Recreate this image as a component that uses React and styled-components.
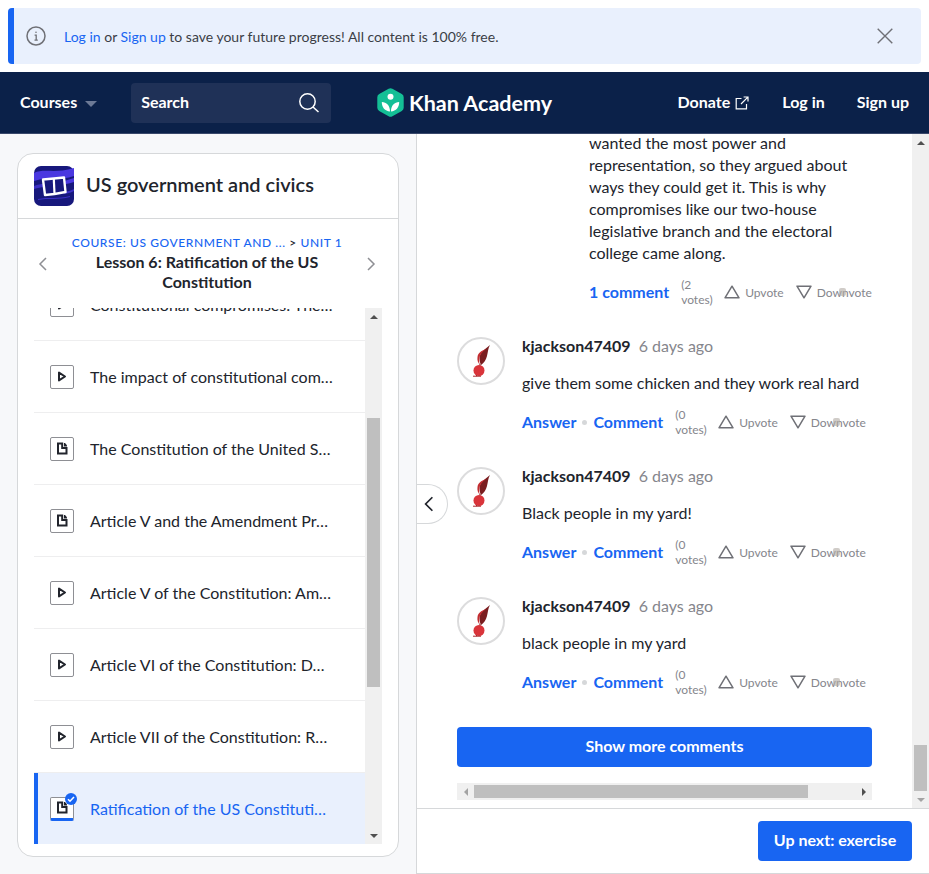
import React from 'react';
import styled, {createGlobalStyle} from 'styled-components';

const GlobalStyle = createGlobalStyle`
    html, body {
        margin: 0;
        padding: 0;
        height: 100%;
        overflow: hidden;
        background: #fff;
    }
    body {
        font-family: Lato, "Liberation Sans", sans-serif;
        color: #21242c;
    }
`;

const Page = styled.div`
    width: 929px;
    height: 874px;
    display: flex;
    flex-direction: column;
    overflow: hidden;
`;

/* banner */
const BannerWrap = styled.div`
    padding: 8px 8px 8px;
`;
const Banner = styled.div`
    height: 56px;
    box-sizing: border-box;
    display: flex;
    align-items: center;
    background: #e9f0fd;
    border-left: 6px solid #1865f2;
    border-radius: 4px;
    padding: 0 28px 0 12px;
    font-size: 14px;
    color: #3b3e46;
`;
const BannerText = styled.div`
    flex: 1;
    margin-left: 18px;
`;
const BannerLink = styled.a`
    color: #1865f2;
`;
const IconSlot = styled.span`
    display: inline-flex;
    flex: none;
`;

/* top nav */
const Nav = styled.header`
    height: 62px;
    box-sizing: border-box;
    background: #0b2149;
    border-bottom: 1px solid #39486b;
    display: grid;
    grid-template-columns: 1fr auto 1fr;
    align-items: center;
    padding: 0 20px;
    color: #fff;
    font-weight: 700;
    font-size: 16px;
`;
const NavLeft = styled.div`
    display: flex;
    align-items: center;
`;
const NavLabel = styled.span`
    margin-top: -2px;
`;
const Caret = styled.span`
    width: 0;
    height: 0;
    margin-left: 8px;
    margin-top: 2px;
    border-left: 6px solid transparent;
    border-right: 6px solid transparent;
    border-top: 6px solid #6d7a96;
`;
const SearchBox = styled.div`
    width: 200px;
    height: 40px;
    box-sizing: border-box;
    margin-left: 34px;
    padding: 0 11px 0 10px;
    border-radius: 4px;
    background: #1f3157;
    display: flex;
    align-items: center;
    justify-content: space-between;
`;
const Logo = styled.div`
    display: flex;
    align-items: center;
    gap: 5px;
    font-size: 21.5px;
    font-weight: 700;
`;
const NavRight = styled.div`
    display: flex;
    justify-content: flex-end;
    align-items: center;
    gap: 32px;
`;
const Donate = styled.span`
    display: inline-flex;
    align-items: center;
    gap: 5px;
    margin-right: 1px;
`;

/* main area */
const Main = styled.main`
    flex: 1;
    min-height: 0;
    display: grid;
    grid-template-columns: 416px 513px;
`;
const Sidebar = styled.aside`
    background: #f7f8fa;
    padding: 19px 17px 17px;
    box-sizing: border-box;
`;
const Card = styled.div`
    height: 704px;
    box-sizing: border-box;
    background: #fff;
    border: 1px solid #d6d8da;
    border-radius: 16px;
    display: flex;
    flex-direction: column;
    padding-bottom: 12px;
`;
const CardHeader = styled.div`
    height: 65px;
    box-sizing: border-box;
    border-bottom: 1px solid #d6d8da;
    display: flex;
    align-items: center;
    padding: 0 16px;
    gap: 12px;
    flex: none;
`;
const CardTitle = styled.span`
    font-size: 20px;
    font-weight: 600;
    margin-top: -4px;
`;
const Crumbs = styled.div`
    height: 89px;
    flex: none;
    display: grid;
    grid-template-columns: 50px 1fr 54px;
    align-items: center;
    justify-items: center;
    box-sizing: border-box;
`;
const CrumbMid = styled.div`
    text-align: center;
    padding-left: 2px;
`;
const CourseLine = styled.div`
    font-size: 12px;
    line-height: 16px;
    margin-bottom: 1px;
    letter-spacing: 0.6px;
    font-weight: 500;
    color: #1865f2;
    white-space: nowrap;
`;
const CrumbSep = styled.span`
    color: #21242c;
`;
const LessonTitle = styled.div`
    font-size: 16px;
    line-height: 20px;
    font-weight: 700;
`;
const ListFrame = styled.div`
    flex: 1;
    min-height: 0;
    margin: 0 0 0 16px;
    width: 348px;
    display: flex;
`;
const ListClip = styled.div`
    flex: 1;
    min-width: 0;
    overflow: hidden;
`;
const List = styled.ul`
    list-style: none;
    margin: -39px 0 0;
    padding: 0;
`;
const Row = styled.li`
    height: 72px;
    box-sizing: border-box;
    display: flex;
    align-items: center;
    gap: 16px;
    padding: 0 16px 0 ${p => (p.$active ? 12 : 16)}px;
    border-bottom: 1px solid #eeeeef;
    background: ${p => (p.$active ? '#e9f0fd' : '#fff')};
    border-left: ${p => (p.$active ? '4px solid #1865f2' : 'none')};
    color: ${p => (p.$active ? '#1865f2' : '#21242c')};
    font-size: 16px;
`;
const RowText = styled.span`
    flex: 1;
    min-width: 0;
    white-space: nowrap;
`;
const RowIcon = styled.span`
    position: relative;
    flex: none;
    width: 24px;
    height: 24px;
    box-sizing: border-box;
    display: flex;
    align-items: center;
    justify-content: center;
    background: #fff;
    border: 1px solid #8e8f94;
    border-bottom: ${p => (p.$active ? '3px solid #1865f2' : '1px solid #8e8f94')};
    border-radius: 2px;
`;
const Badge = styled.span`
    position: absolute;
    top: -5px;
    right: -4px;
    width: 12px;
    height: 12px;
    border-radius: 50%;
    background: #1865f2;
    display: flex;
    align-items: center;
    justify-content: center;
`;

/* fake classic scrollbars */
const VBar = styled.div`
    width: 17px;
    flex: none;
    background: #f0f0f0;
    display: flex;
    flex-direction: column;
`;
const VTrack = styled.div`
    flex: 1;
    min-height: 0;
`;
const VThumb = styled.div`
    background: #bfbfbf;
    margin: ${p => p.$top}px 2px 0;
    height: ${p => p.$height}px;
`;
const HBar = styled.div`
    height: 17px;
    background: #f0f0f0;
    display: flex;
    align-items: center;
    margin-top: 16px;
`;
const HTrack = styled.div`
    flex: 1;
    padding-right: 47px;
`;
const HThumb = styled.div`
    height: 13px;
    background: #bfbfbf;
`;
const Arrow = styled.span`
    width: 17px;
    height: 17px;
    flex: none;
    display: flex;
    align-items: center;
    justify-content: center;
`;

/* right pane */
const Pane = styled.section`
    position: relative;
    border-left: 1px solid #d6d8da;
    border-bottom: 1px solid #d6d8da;
    box-sizing: border-box;
    display: flex;
    flex-direction: column;
    background: #fff;
    min-height: 0;
`;
const PaneBody = styled.div`
    flex: 1;
    min-height: 0;
    display: flex;
`;
const PaneClip = styled.div`
    flex: 1;
    min-width: 0;
    overflow: hidden;
    padding: 0 40px;
`;
const Reply = styled.div`
    margin: -2px 0 0 132px;
`;
const ReplyText = styled.p`
    margin: 0;
    font-size: 16px;
    line-height: 22px;
`;
const Actions = styled.div`
    height: 30px;
    box-sizing: border-box;
    padding-bottom: 2px;
    display: flex;
    align-items: center;
    margin-top: 13px;
    font-size: 16px;
    font-weight: 700;
    color: #1865f2;
    white-space: nowrap;
`;
const Dot = styled.span`
    flex: none;
    width: 5px;
    height: 5px;
    border-radius: 50%;
    background: #d6d8da;
    margin: 2px 6px 0 6px;
`;
const Votes = styled.span`
    flex: none;
    width: 31px;
    margin: 2px 12px 0 12px;
    font-size: 12px;
    line-height: 15px;
    font-weight: 400;
    color: #85868c;
    white-space: normal;
`;
const VoteButton = styled.span`
    position: relative;
    display: inline-flex;
    align-items: center;
    gap: 5px;
    margin: 2px 12px 0 0;
    font-size: 12px;
    font-weight: 400;
    color: #85868c;
`;
const Overlap = styled.span`
    position: absolute;
    right: 26px;
    top: 50%;
    margin-top: -4px;
    width: 7px;
    height: 8px;
    background: #b0aaa4;
    opacity: .6;
    border-radius: 2px;
`;
const Comment = styled.article`
    display: flex;
    gap: 17px;
    margin-top: 29px;
`;
const Avatar = styled.div`
    width: 48px;
    height: 48px;
    margin-top: 1px;
    box-sizing: border-box;
    flex: none;
    border: 2px solid #dcdcdd;
    border-radius: 50%;
    display: flex;
    align-items: center;
    justify-content: center;
`;
const CommentBody = styled.div`
    flex: 1;
    min-width: 0;
`;
const Meta = styled.div`
    height: 20px;
    line-height: 20px;
    font-size: 16px;
    display: flex;
    gap: 8px;
`;
const Author = styled.span`
    font-weight: 700;
`;
const When = styled.span`
    color: #85868c;
`;
const CommentText = styled.p`
    margin: 16px 0 0;
    font-size: 16px;
    line-height: 22px;
`;
const BlueButton = styled.div`
    height: 40px;
    border-radius: 4px;
    background: #1865f2;
    color: #fff;
    font-size: 16px;
    font-weight: 700;
    display: flex;
    align-items: center;
    justify-content: center;
    box-sizing: border-box;
    padding-bottom: 4px;
    flex: none;
`;
const ShowMore = styled(BlueButton)`
    margin-top: 30px;
`;
const Footer = styled.div`
    height: 65px;
    flex: none;
    box-sizing: border-box;
    border-top: 1px solid #d6d8da;
    display: flex;
    align-items: center;
    justify-content: flex-end;
    padding: 0 17px 0 0;
`;
const UpNext = styled(BlueButton)`
    width: 154px;
`;
const CollapseTab = styled.div`
    position: absolute;
    left: 0;
    top: 350px;
    width: 31px;
    height: 40px;
    box-sizing: border-box;
    background: #fff;
    border: 1px solid #d6d8da;
    border-left: none;
    border-radius: 0 20px 20px 0;
    display: flex;
    align-items: center;
    padding-left: 3px;
`;

const InfoIcon = () => (
    <svg width="20" height="20" viewBox="0 0 20 20" fill="none" stroke="#6f7076" strokeWidth="1.5">
        <circle cx="10" cy="10" r="9"/>
        <path d="M8.6 9.2h1.6v5M8.5 14.2h3.3" strokeWidth="1.3"/>
        <circle cx="10" cy="6.2" r="0.8" fill="#6f7076" stroke="none"/>
    </svg>
);

const CloseIcon = () => (
    <svg width="16" height="16" viewBox="0 0 16 16" fill="none" stroke="#6f7076" strokeWidth="1.4">
        <path d="M0.7 0.7l14.6 14.6M15.3 0.7L0.7 15.3"/>
    </svg>
);

const SearchIcon = () => (
    <svg width="22" height="22" viewBox="0 0 22 22" fill="none" stroke="#fff" strokeWidth="1.5">
        <circle cx="9.5" cy="9.5" r="7.7"/>
        <path d="M15 15l5.5 5"/>
    </svg>
);

const KhanLogo = () => (
    <svg width="27" height="29" viewBox="0 0 27 29">
        <path d="M11.6 0.8a4 4 0 0 1 3.8 0l9.4 5.2a3.6 3.6 0 0 1 1.9 3.2v10.6a3.6 3.6 0 0 1-1.9 3.2l-9.4 5.2a4 4 0 0 1-3.8 0l-9.4-5.2A3.6 3.6 0 0 1 .3 19.8V9.2A3.6 3.6 0 0 1 2.2 6z" fill="#14bf96"/>
        <circle cx="13.5" cy="8.8" r="3" fill="#fff"/>
        <path d="M13 23.5C8 23 4.8 19.5 4.8 14c4.6 0 8.2 3.4 8.2 9.5zM14 23.5c5-.5 8.2-4 8.2-9.5-4.6 0-8.2 3.4-8.2 9.5z" fill="#fff"/>
    </svg>
);

const ExternalIcon = () => (
    <svg width="14" height="14" viewBox="0 0 14 14" fill="none" stroke="#fff" strokeWidth="1.2">
        <path d="M6.5 2.5H1.2v10.3h10.3V8M6 8l6.6-6.6M8.6 1h4.4v4.4"/>
    </svg>
);

const CourseIcon = () => (
    <svg width="40" height="40" viewBox="0 0 40 40">
        <rect width="40" height="40" rx="7" fill="#17187c"/>
        <path d="M0 7c10-5 20 1 40-5v8c-14 5-24 0-40 5zM24 16c6-1 10-2 16-4v4c-6 2-10 2-16 3z" fill="#4a38e0"/>
        <path d="M0 20c6-2 8-2 10-2v3c-3 0-6 1-10 2zM30 26c4-1 6-1 10-3v2c-4 2-6 2-10 3zM4 33c10-2 20 0 32-3v1c-12 3-22 1-32 3z" fill="#3b2fc4"/>
        <path d="M9 13.5L19.8 12.5 30 11.5 31.5 26 20.5 28 11 29z" fill="#17187c" stroke="#fff" strokeWidth="2.4" strokeLinejoin="round"/>
        <path d="M19.8 13l.7 14.5" stroke="#fff" strokeWidth="2.2"/>
    </svg>
);

const Chevron = ({dir = 'left', size = 16, color = '#8e8f94', width = 1.5}) => (
    <svg width={size} height={size} viewBox="0 0 16 16" fill="none" stroke={color} strokeWidth={width}>
        {dir === 'left' ? <path d="M11 2L5 8l6 6"/> : <path d="M5 2l6 6-6 6"/>}
    </svg>
);

const PlayGlyph = () => (
    <svg width="10" height="11" viewBox="0 0 10 11" fill="none" stroke="#21242c" strokeWidth="2">
        <path d="M2 1.6v7.8L8 5.5z" strokeLinejoin="round"/>
    </svg>
);

const DocGlyph = () => (
    <svg width="12" height="13" viewBox="0 0 12 13" fill="none" stroke="#21242c" strokeWidth="2">
        <path d="M2 1.5v10h8.5V6H6.2V1.5z"/>
        <path d="M8 1h1l2 2.2V4.5H8z" fill="#21242c" stroke="none"/>
    </svg>
);

const CheckGlyph = () => (
    <svg width="8" height="8" viewBox="0 0 8 8" fill="none" stroke="#fff" strokeWidth="1.6">
        <path d="M1 4.2l2 2 4-4.2"/>
    </svg>
);

const Triangle = ({down}) => (
    <svg width="16" height="14" viewBox="0 0 16 14" fill="none" stroke="#6f7076" strokeWidth="1.5" strokeLinejoin="round">
        {down ? <path d="M1 1.2h14L8 12.8z"/> : <path d="M8 1.2l7 11.6H1z"/>}
    </svg>
);

const ArrowGlyph = ({dir, color = '#505050'}) => {
    const shapes = {
        up: '0,4 8,4 4,0',
        down: '0,0 8,0 4,4',
        left: '4,0 4,8 0,4',
        right: '0,0 0,8 4,4',
    };
    const vertical = dir === 'up' || dir === 'down';
    return (
        <svg width={vertical ? 8 : 4} height={vertical ? 4 : 8}>
            <polygon points={shapes[dir]} fill={color}/>
        </svg>
    );
};

const Feather = () => (
    <svg width="22" height="32" viewBox="0 0 22 32">
        <path d="M20 0C17 3 13 5 11 8c-2 3-2 8 0 12 3-2 5-5 6-9 1-4 1-8 3-11z" fill="#7a1d1f"/>
        <path d="M16 4C11 6 8 8 7.5 12c-.5 3 .5 6 2.5 8-1.5-3-1-8 1-11 1.5-2 3-3.5 5-5z" fill="#c22c30"/>
        <path d="M10 19v2" stroke="#7a1d1f" strokeWidth="1"/>
        <circle cx="9" cy="25.5" r="5.5" fill="#d9343a"/>
        <path d="M3 31.2h8M6.5 30v1.2" stroke="#a8262b" strokeWidth="1"/>
    </svg>
);

const lessons = [
    {title: 'Constitutional compromises: The…', kind: 'play'},
    {title: 'The impact of constitutional com…', kind: 'play'},
    {title: 'The Constitution of the United S…', kind: 'doc'},
    {title: 'Article V and the Amendment Pr…', kind: 'doc'},
    {title: 'Article V of the Constitution: Am…', kind: 'play'},
    {title: 'Article VI of the Constitution: D…', kind: 'play'},
    {title: 'Article VII of the Constitution: R…', kind: 'play'},
    {title: 'Ratification of the US Constituti…', kind: 'doc', active: true},
];

const comments = [
    'give them some chicken and they work real hard',
    'Black people in my yard!',
    'black people in my yard',
];

const VoteBlock = ({count}) => (
    <>
        <Votes>({count} votes)</Votes>
        <VoteButton><Triangle/>Upvote</VoteButton>
        <VoteButton><Triangle down/>Downvote<Overlap/></VoteButton>
    </>
);

const App = () => {
    return (
        <Page>
            <GlobalStyle/>
            <BannerWrap>
                <Banner>
                    <IconSlot><InfoIcon/></IconSlot>
                    <BannerText>
                        <BannerLink>Log in</BannerLink> or <BannerLink>Sign up</BannerLink> to save your future progress! All content is 100% free.
                    </BannerText>
                    <IconSlot><CloseIcon/></IconSlot>
                </Banner>
            </BannerWrap>
            <Nav>
                <NavLeft>
                    <NavLabel>Courses</NavLabel><Caret/>
                    <SearchBox><NavLabel>Search</NavLabel><SearchIcon/></SearchBox>
                </NavLeft>
                <Logo><KhanLogo/>Khan Academy</Logo>
                <NavRight>
                    <Donate><NavLabel>Donate</NavLabel> <ExternalIcon/></Donate>
                    <NavLabel>Log in</NavLabel>
                    <NavLabel>Sign up</NavLabel>
                </NavRight>
            </Nav>
            <Main>
                <Sidebar>
                    <Card>
                        <CardHeader><IconSlot><CourseIcon/></IconSlot><CardTitle>US government and civics</CardTitle></CardHeader>
                        <Crumbs>
                            <Chevron dir="left"/>
                            <CrumbMid>
                                <CourseLine>COURSE: US GOVERNMENT AND ... <CrumbSep>&gt;</CrumbSep> UNIT 1</CourseLine>
                                <LessonTitle>Lesson 6: Ratification of the US Constitution</LessonTitle>
                            </CrumbMid>
                            <Chevron dir="right"/>
                        </Crumbs>
                        <ListFrame>
                            <ListClip>
                                <List>
                                    {lessons.map((l) => (
                                        <Row key={l.title} $active={l.active}>
                                            <RowIcon $active={l.active}>
                                                {l.kind === 'play' ? <PlayGlyph/> : <DocGlyph/>}
                                                {l.active && <Badge><CheckGlyph/></Badge>}
                                            </RowIcon>
                                            <RowText>{l.title}</RowText>
                                        </Row>
                                    ))}
                                </List>
                            </ListClip>
                            <VBar>
                                <Arrow><ArrowGlyph dir="up"/></Arrow>
                                <VTrack><VThumb $top={93} $height={269}/></VTrack>
                                <Arrow><ArrowGlyph dir="down"/></Arrow>
                            </VBar>
                        </ListFrame>
                    </Card>
                </Sidebar>
                <Pane>
                    <PaneBody>
                        <PaneClip>
                            <Reply>
                                <ReplyText>
                                    wanted the most power and representation, so they argued about ways they could get it. This is why compromises like our two-house legislative branch and the electoral college came along.
                                </ReplyText>
                                <Actions>1 comment<VoteBlock count={2}/></Actions>
                            </Reply>
                            {comments.map((text) => (
                                <Comment key={text}>
                                    <Avatar><Feather/></Avatar>
                                    <CommentBody>
                                        <Meta><Author>kjackson47409</Author><When>6 days ago</When></Meta>
                                        <CommentText>{text}</CommentText>
                                        <Actions>Answer<Dot/>Comment<VoteBlock count={0}/></Actions>
                                    </CommentBody>
                                </Comment>
                            ))}
                            <ShowMore>Show more comments</ShowMore>
                            <HBar>
                                <Arrow><ArrowGlyph dir="left" color="#a3a3a3"/></Arrow>
                                <HTrack><HThumb/></HTrack>
                                <Arrow><ArrowGlyph dir="right"/></Arrow>
                            </HBar>
                        </PaneClip>
                        <VBar>
                            <Arrow><ArrowGlyph dir="up"/></Arrow>
                            <VTrack><VThumb $top={594} $height={46}/></VTrack>
                            <Arrow><ArrowGlyph dir="down" color="#a3a3a3"/></Arrow>
                        </VBar>
                    </PaneBody>
                    <Footer><UpNext>Up next: exercise</UpNext></Footer>
                    <CollapseTab><Chevron dir="left" size={18} color="#21242c"/></CollapseTab>
                </Pane>
            </Main>
        </Page>
    );
};

export default App;
